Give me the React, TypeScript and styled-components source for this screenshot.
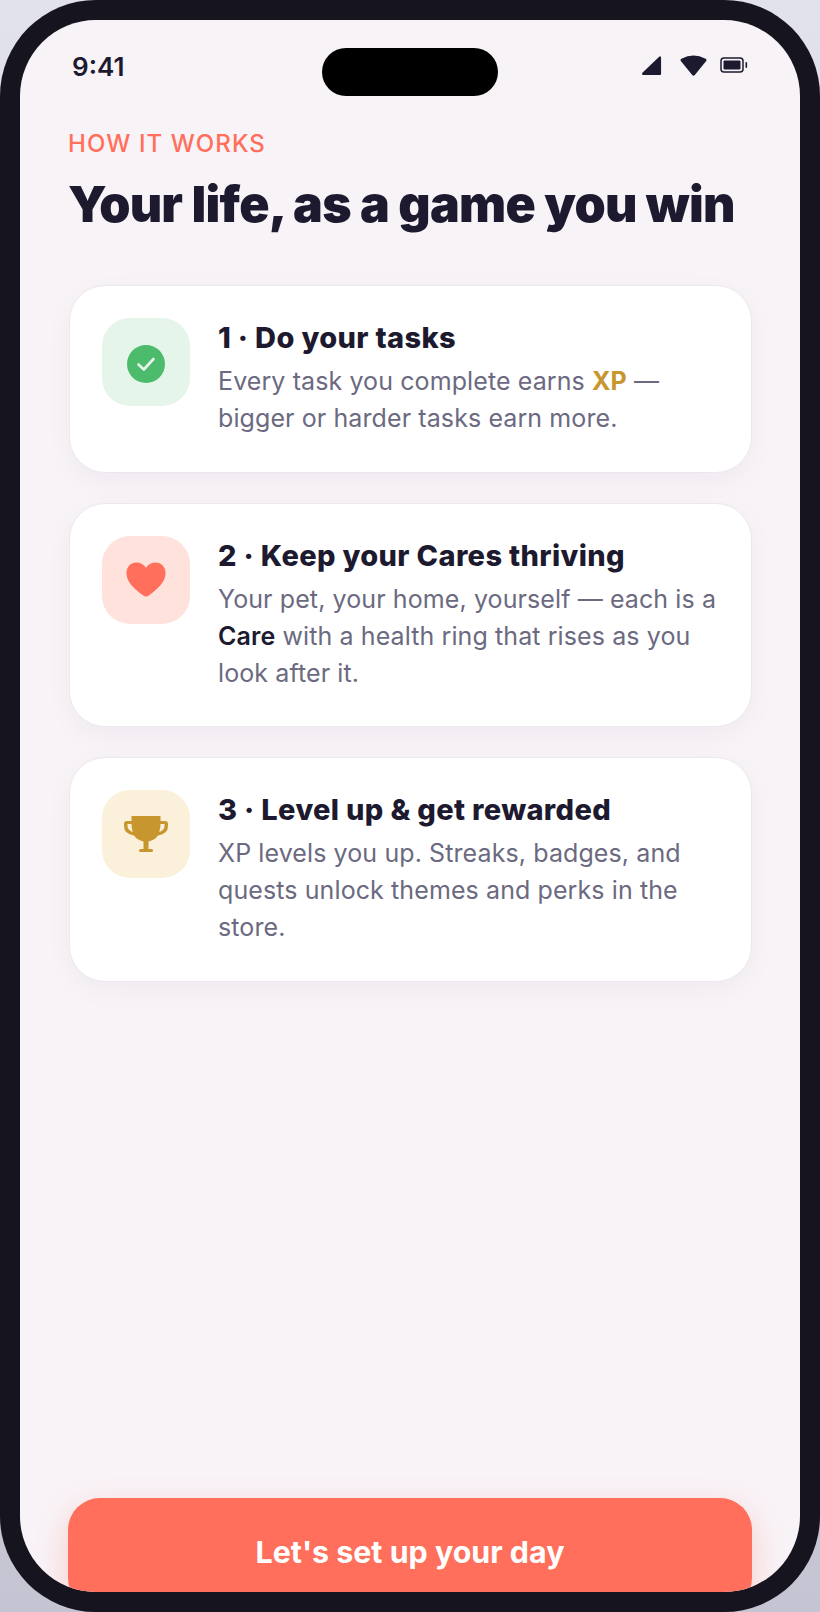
import { ReactNode } from 'react';
import styled, { createGlobalStyle } from 'styled-components';

const Global = createGlobalStyle`
  html, body {
    margin: 0;
    padding: 0;
    background: #d8d8e2;
  }
  * {
    box-sizing: border-box;
  }
`;

const Stage = styled.div`
  width: 820px;
  height: 1612px;
  background: linear-gradient(180deg, #e2e2ec 0%, #c4c4d2 100%);
  overflow: hidden;
`;

const Phone = styled.div`
  width: 820px;
  height: 1612px;
  padding: 20px;
  border-radius: 96px;
  background: #15141f;
`;

const Screen = styled.div`
  position: relative;
  width: 780px;
  height: 1572px;
  border-radius: 76px;
  background: #f8f3f7;
  overflow: hidden;
  display: flex;
  flex-direction: column;
  font-family: Inter, 'Noto Sans', sans-serif;
`;

const Island = styled.div`
  position: absolute;
  top: 28px;
  left: 302px;
  width: 176px;
  height: 48px;
  border-radius: 24px;
  background: #000;
`;

const StatusBar = styled.div`
  height: 90px;
  padding: 31px 52px 0 52px;
  display: flex;
  justify-content: space-between;
  align-items: flex-start;
  flex-shrink: 0;
`;

const Clock = styled.div`
  font-size: 26px;
  line-height: 32px;
  font-weight: 600;
  color: #1d1a30;
`;

const StatusIcons = styled.div`
  display: flex;
  align-items: center;
  gap: 18px;
  padding-top: 3px;
`;

const BatteryIcon = styled.svg`
  margin-left: -5px;
`;

const Content = styled.div`
  flex: 1;
  padding: 0 48px;
  display: flex;
  flex-direction: column;
`;

const Eyebrow = styled.div`
  margin-top: 20px;
  font-size: 24px;
  line-height: 28px;
  font-weight: 500;
  letter-spacing: 1.1px;
  color: #ff6f5b;
`;

const Heading = styled.h1`
  margin: 16px 0 0;
  font-family: Inter, 'Noto Sans', sans-serif;
  font-size: 50px;
  line-height: 60px;
  font-weight: 900;
  letter-spacing: -0.75px;
  color: #1d1a30;
  white-space: nowrap;
`;

const Cards = styled.div`
  margin-top: 51px;
  display: flex;
  flex-direction: column;
  gap: 30px;
`;

const Card = styled.div`
  display: flex;
  align-items: flex-start;
  gap: 28px;
  padding: 32px 32px 34.5px;
  margin-left: 1px;
  width: 683px;
  border-radius: 36px;
  border: 1px solid #ece8ed;
  background: #fff;
  box-shadow: 0 8px 28px rgba(29, 26, 48, 0.04);
`;

const IconTile = styled.div<{ $bg: string }>`
  width: 88px;
  height: 88px;
  flex-shrink: 0;
  border-radius: 28px;
  background: ${(p) => p.$bg};
  display: flex;
  align-items: center;
  justify-content: center;
`;

const CheckIcon = styled.svg`
  margin-top: 4px;
`;

const CardText = styled.div`
  min-width: 0;
`;

const CardTitle = styled.div`
  font-size: 29px;
  line-height: 40px;
  font-weight: 800;
  letter-spacing: 0.35px;
  color: #1d1a30;
  white-space: nowrap;
`;

const CardBody = styled.div`
  margin-top: 5px;
  font-size: 25px;
  line-height: 37px;
  font-weight: 400;
  letter-spacing: 0.1px;
  color: #6b6a80;
`;

const Gold = styled.b`
  font-weight: 700;
  color: #c8962e;
`;

const Strong = styled.b`
  font-weight: 600;
  color: #1d1a30;
`;

const Cta = styled.button`
  position: absolute;
  left: 48px;
  top: 1478px;
  width: 684px;
  height: 112px;
  padding: 0 0 4px;
  border: none;
  border-radius: 32px;
  background: #ff6f5b;
  box-shadow: 0 12px 32px rgba(255, 111, 91, 0.3);
  color: #fff;
  font-family: Inter, 'Noto Sans', sans-serif;
  font-size: 30.4px;
  font-weight: 700;
`;

function Step({ bg, icon, title, children }: { bg: string; icon: ReactNode; title: string; children: ReactNode }) {
  return (
    <Card>
      <IconTile $bg={bg}>{icon}</IconTile>
      <CardText>
        <CardTitle>{title}</CardTitle>
        <CardBody>{children}</CardBody>
      </CardText>
    </Card>
  );
}

function App() {
  return (
    <>
      <Global />
      <Stage>
        <Phone>
          <Screen>
            <Island />
            <StatusBar>
              <Clock>9:41</Clock>
              <StatusIcons>
                <svg width="21" height="21" viewBox="0 0 22 22">
                  <path d="M1.5 18.5 L19 1.8 Q21 0.6 21 3 V20 Q21 21 20 21 H2 Q0.2 20.5 1.5 18.5 Z" fill="#1d1a30" />
                </svg>
                <svg width="27" height="22" viewBox="0 0 27 22">
                  <path d="M0.8 7 Q0 5.6 1.4 4.8 Q13.5 -2 25.6 4.8 Q27 5.6 26.2 7 L14.8 21 Q13.5 22.4 12.2 21 Z" fill="#1d1a30" />
                </svg>
                <BatteryIcon width="28" height="16" viewBox="0 0 28 16">
                  <rect x="1" y="1" width="22" height="14" rx="3" fill="none" stroke="#1d1a30" strokeWidth="1.5" />
                  <rect x="3.5" y="3.5" width="17" height="9" rx="1" fill="#1d1a30" />
                  <rect x="25.5" y="5" width="1.6" height="6" rx="0.8" fill="#1d1a30" />
                </BatteryIcon>
              </StatusIcons>
            </StatusBar>
            <Content>
              <Eyebrow>HOW IT WORKS</Eyebrow>
              <Heading>Your life, as a game you win</Heading>
              <Cards>
                <Step
                  bg="#e5f5ea"
                  title="1 · Do your tasks"
                  icon={
                    <CheckIcon width="38" height="38" viewBox="0 0 38 38">
                      <circle cx="19" cy="19" r="19" fill="#4cbb6c" />
                      <path d="M11.5 19.5 L16.8 24.5 L26.5 14" fill="none" stroke="#e5f5ea" strokeWidth="2.6" strokeLinecap="round" strokeLinejoin="round" />
                    </CheckIcon>
                  }
                >
                  Every task you complete earns <Gold>XP</Gold> — bigger or harder tasks earn more.
                </Step>
                <Step
                  bg="#ffe2dc"
                  title="2 · Keep your Cares thriving"
                  icon={
                    <svg width="40" height="35" viewBox="0 0 42 36" preserveAspectRatio="none">
                      <path d="M21 35.5 C19.8 35.5 18.8 35 17.8 34.2 C9 27.6 1 21 0.5 12 C0.2 5 5 0.5 11 0.5 C15.2 0.5 18.8 2.6 21 6 C23.2 2.6 26.8 0.5 31 0.5 C37 0.5 41.8 5 41.5 12 C41 21 33 27.6 24.2 34.2 C23.2 35 22.2 35.5 21 35.5 Z" fill="#ff6f5b" />
                    </svg>
                  }
                >
                  Your pet, your home, yourself — each is a <Strong>Care</Strong> with a health ring that rises as you look after it.
                </Step>
                <Step
                  bg="#fbf0d9"
                  title="3 · Level up & get rewarded"
                  icon={
                    <svg width="44" height="36" viewBox="0 0 44 36">
                      <path d="M7.5 0 H36.5 V5 H41 Q44 5 44 8 V10 Q44 18 34 19.5 Q31 24 24.5 25.5 V33 H27.5 Q29 33 29 34.5 Q29 36 27.5 36 H16.5 Q15 36 15 34.5 Q15 33 16.5 33 H19.5 V25.5 Q13 24 10 19.5 Q0 18 0 10 V8 Q0 5 3 5 H7.5 Z M7.5 8 H3.5 V10 Q3.5 14 8.8 16 Q7.5 12 7.5 8 Z M36.5 8 Q36.5 12 35.2 16 Q40.5 14 40.5 10 V8 Z" fill="#c8962e" fillRule="evenodd" />
                    </svg>
                  }
                >
                  XP levels you up. Streaks, badges, and quests unlock themes and perks in the store.
                </Step>
              </Cards>
            </Content>
            <Cta>Let's set up your day</Cta>
          </Screen>
        </Phone>
      </Stage>
    </>
  );
}

export default App;
